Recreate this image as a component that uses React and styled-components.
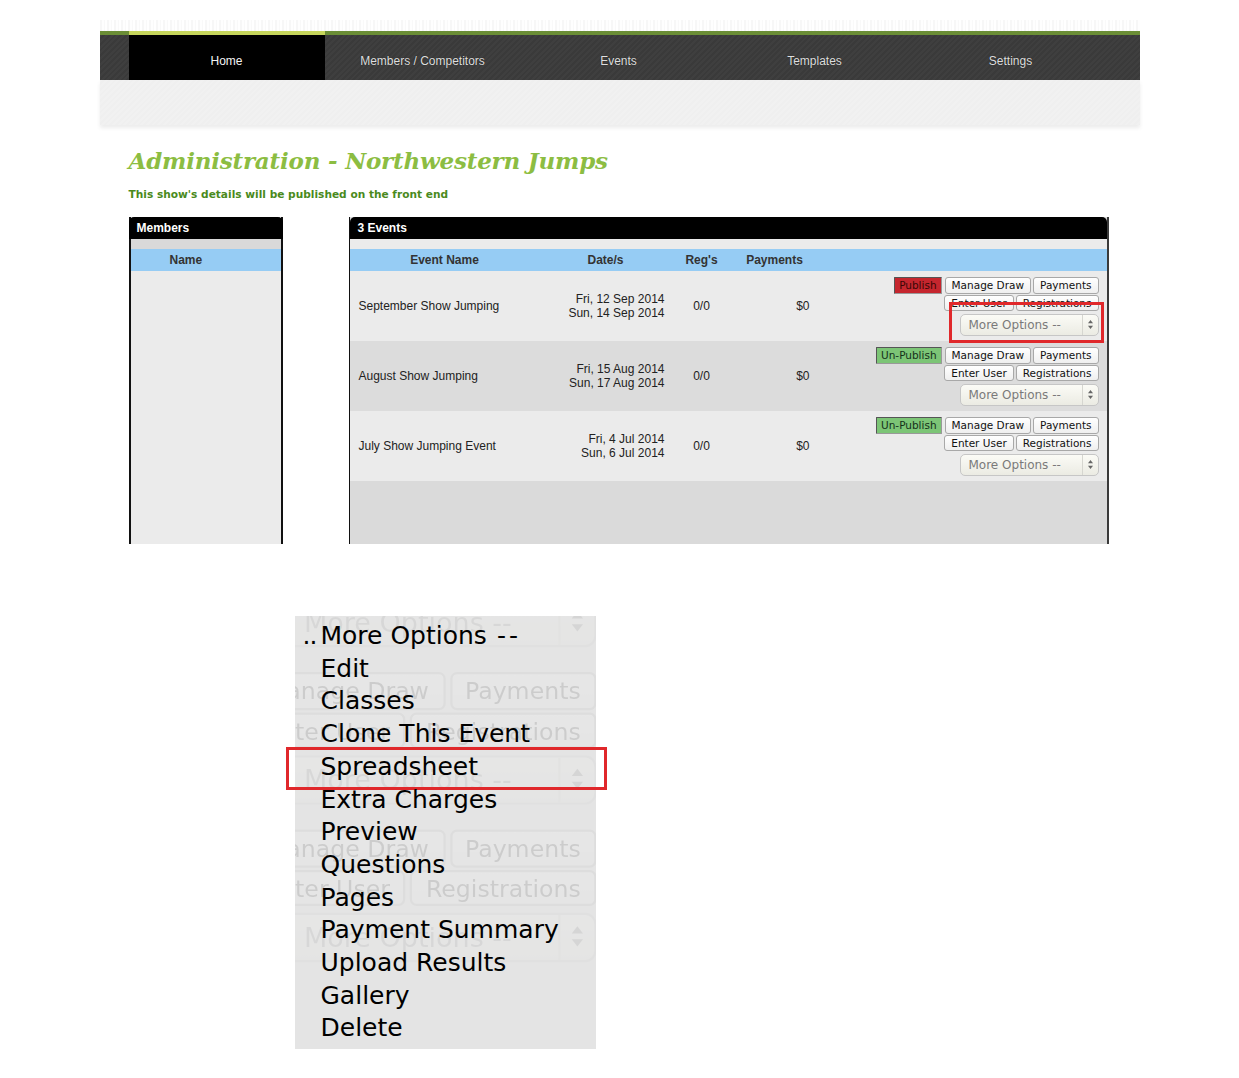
import React from 'react';
import styled, { createGlobalStyle } from 'styled-components';

const GlobalStyle = createGlobalStyle`
  html, body {
    margin: 0;
    padding: 0;
    background: #fff;
  }
  body {
    font-family: "Liberation Sans", Arial, sans-serif;
    color: #222;
  }
`;

const Page = styled.div`
  width: 1040px;
  margin: 0 auto;
  padding-top: 20px;
`;

const PatternStrip = styled.div`
  height: 11px;
  background: repeating-linear-gradient(90deg, #f7f7f7 0 2px, #fefefe 2px 4px, #f9f9f9 4px 5px, #fff 5px 7px);
`;

const GreenBar = styled.div`
  height: 4px;
  padding-left: 29px;
  background: #6b8e36;
`;

const Accent = styled.div`
  width: 196px;
  height: 100%;
  background: #c6d65c;
`;

const Nav = styled.nav`
  display: flex;
  height: 45px;
  padding-left: 29px;
  background: repeating-linear-gradient(135deg, #3f3f3f 0 2px, #3a3a3a 2px 4px);
`;

const Tab = styled.a`
  width: 196px;
  display: flex;
  align-items: center;
  justify-content: center;
  padding-top: 6px;
  box-sizing: border-box;
  font-size: 12px;
  color: ${(p) => (p.active ? '#f4f4f4' : '#dedede')};
  background: ${(p) => (p.active ? '#000' : 'transparent')};
  text-decoration: none;
  text-shadow: 0 0 1px rgba(0, 0, 0, 0.6);
`;

const Band = styled.div`
  height: 45px;
  background: repeating-linear-gradient(135deg, #f1f1f1 0 2px, #efefef 2px 4px);
  box-shadow: 0 3px 4px rgba(0, 0, 0, 0.08);
`;

const Content = styled.main`
  padding: 0 31px 0 29px;
`;

const Title = styled.h1`
  margin: 21px 0 0;
  font-family: "DejaVu Serif", Georgia, serif;
  font-style: italic;
  font-weight: bold;
  font-size: 23px;
  line-height: 30px;
  color: #8cbd42;
  letter-spacing: -0.2px;
`;

const Subtitle = styled.p`
  margin: 10px 0 0;
  font-family: "DejaVu Sans", Verdana, sans-serif;
  font-size: 10.6px;
  line-height: 16px;
  font-weight: bold;
  color: #4a8a1c;
`;

const Panels = styled.div`
  display: flex;
  gap: 66px;
  height: 327px;
  margin-top: 15px;
`;

const Panel = styled.section`
  width: ${(p) => p.width}px;
  display: flex;
  flex-direction: column;
  box-sizing: border-box;
  border-left: ${(p) => p.leftBorder};
  border-right: ${(p) => p.rightBorder};
  background: ${(p) => p.fill};
`;

const PanelHead = styled.header`
  height: 22px;
  flex: none;
  display: flex;
  align-items: center;
  padding-left: 8px;
  margin: 0 ${(p) => p.bleed};
  background: #000;
  border-radius: 5px 5px 0 0;
  color: #fff;
  font-size: 12px;
  font-weight: bold;
`;

const Strip = styled.div`
  height: 10px;
  flex: none;
  background: ${(p) => p.color};
`;

const HeadRow = styled.div`
  height: 22px;
  flex: none;
  display: grid;
  grid-template-columns: ${(p) => p.cols};
  align-items: center;
  background: #96ccf4;
  font-size: 12px;
  font-weight: bold;
  color: #333;
`;

const HeadCell = styled.div`
  text-align: ${(p) => p.align || 'center'};
  padding-left: ${(p) => p.indent || 0}px;
`;

const Row = styled.div`
  height: 70px;
  flex: none;
  display: grid;
  grid-template-columns: 190px 132px 60px 86px 1fr;
  align-items: center;
  background: ${(p) => (p.shade ? '#dcdcdc' : '#ebebeb')};
  font-size: 12px;
  color: #222;
`;

const NameCell = styled.div`
  padding-left: 9px;
`;

const DateCell = styled.div`
  text-align: right;
  padding-right: 7px;
  line-height: 14px;
`;

const RegCell = styled.div`
  text-align: center;
`;

const PayCell = styled.div`
  text-align: right;
  padding-right: 8px;
`;

const ActionsCell = styled.div`
  display: flex;
  justify-content: flex-end;
  padding-right: 8px;
`;

const Stack = styled.div`
  display: flex;
  flex-direction: column;
  align-items: flex-end;
  gap: 1px;
`;

const BtnRow = styled.div`
  display: flex;
  gap: 2px;
`;

const Btn = styled.button`
  height: ${(p) => (p.short ? 16 : 17)}px;
  padding: 0 6px;
  border: 1px solid #a8a8a8;
  border-radius: 3px;
  background: linear-gradient(#ffffff, #efefef);
  font-family: "DejaVu Sans", Verdana, sans-serif;
  font-size: 10.5px;
  line-height: 14px;
  color: #111;
  white-space: nowrap;
`;

const StatusBtn = styled.button`
  height: 17px;
  margin-right: 1px;
  padding: 0 4px;
  border: 1px solid;
  border-color: #555 #999 #999 #555;
  border-radius: 1px;
  background: ${(p) => (p.live ? '#7cc576' : '#c5262e')};
  font-family: "DejaVu Sans", Verdana, sans-serif;
  font-size: 10.5px;
  line-height: 14px;
  color: ${(p) => (p.live ? '#14301a' : '#3a0606')};
  white-space: nowrap;
`;

const SelectBox = styled.div`
  position: relative;
  width: 139px;
  height: 22px;
  margin-top: 2px;
  box-sizing: border-box;
  display: flex;
  align-items: center;
  border: 1px solid #c6c6c6;
  border-radius: 5px;
  background: linear-gradient(#fbfbf6, #ebebe3);
  font-family: "DejaVu Sans", Verdana, sans-serif;
  font-size: 12px;
  color: #7a7a7a;
`;

const SelectText = styled.span`
  flex: 1;
  padding-left: 8px;
`;

const SelectArrows = styled.span`
  width: 15px;
  height: 100%;
  display: flex;
  align-items: center;
  justify-content: center;
  border-left: 1px solid #d6d6d0;
  color: #666;
`;

const Marker = styled.span`
  position: absolute;
  top: -13px;
  left: -12px;
  right: -6px;
  bottom: -8px;
  border: 3px solid #e0282b;
  pointer-events: none;
`;

const Filler = styled.div`
  flex: 1;
  background: #dadada;
`;

const Menu = styled.div`
  position: relative;
  width: 301px;
  margin: 72px 0 0 166px;
  padding: 4px 0;
  background: #e4e4e4;
`;

const Ghost = styled.div`
  position: absolute;
  inset: 0;
  overflow: hidden;
  opacity: 0.11;
  filter: blur(0.6px);
  pointer-events: none;
  user-select: none;
`;

const GhostInner = styled.div`
  position: absolute;
  left: -18px;
  top: -115px;
  width: 150px;
  transform: scale(2.25);
  transform-origin: 0 0;
`;

const GhostRow = styled.div`
  height: 70px;
  display: flex;
  align-items: center;
  justify-content: flex-end;
  padding-right: 8px;
`;

const Item = styled.div`
  position: relative;
  display: grid;
  grid-template-columns: 26px 1fr;
  font-family: "DejaVu Sans", Verdana, sans-serif;
  font-size: 25px;
  line-height: 32.7px;
  color: #000;

  &::after {
    content: '';
    display: ${(p) => (p.marked ? 'block' : 'none')};
    position: absolute;
    top: -4px;
    bottom: -6px;
    left: -9px;
    right: -11px;
    border: 3px solid #e0282b;
  }
`;

const Dots = styled.span`
  justify-self: end;
  margin-right: 4px;
  letter-spacing: -1px;
`;

const Dash = styled.span`
  margin-left: 10px;
  letter-spacing: 3px;
`;

const ArrowGlyph = () => (
  <svg width="7" height="11" viewBox="0 0 7 11">
    <path d="M3.5 1 L6 4.2 H1 Z" fill="#666" />
    <path d="M3.5 10 L6 6.8 H1 Z" fill="#666" />
  </svg>
);

const tabs = ['Home', 'Members / Competitors', 'Events', 'Templates', 'Settings'];

const events = [
  { name: 'September Show Jumping', from: 'Fri, 12 Sep 2014', to: 'Sun, 14 Sep 2014', live: false, marked: true },
  { name: 'August Show Jumping', from: 'Fri, 15 Aug 2014', to: 'Sun, 17 Aug 2014', live: true },
  { name: 'July Show Jumping Event', from: 'Fri, 4 Jul 2014', to: 'Sun, 6 Jul 2014', live: true },
];

const menuItems = [
  'More Options',
  'Edit',
  'Classes',
  'Clone This Event',
  'Spreadsheet',
  'Extra Charges',
  'Preview',
  'Questions',
  'Pages',
  'Payment Summary',
  'Upload Results',
  'Gallery',
  'Delete',
];

const Actions = ({ live, marked }) => (
  <Stack>
    <BtnRow>
      <StatusBtn live={live}>{live ? 'Un-Publish' : 'Publish'}</StatusBtn>
      <Btn>Manage Draw</Btn>
      <Btn>Payments</Btn>
    </BtnRow>
    <BtnRow>
      <Btn short>Enter User</Btn>
      <Btn short>Registrations</Btn>
    </BtnRow>
    <SelectBox>
      <SelectText>More Options --</SelectText>
      <SelectArrows>
        <ArrowGlyph />
      </SelectArrows>
      {marked && <Marker />}
    </SelectBox>
  </Stack>
);

export default function App() {
  return (
    <Page>
      <GlobalStyle />
      <PatternStrip />
      <GreenBar>
        <Accent />
      </GreenBar>
      <Nav>
        {tabs.map((t, i) => (
          <Tab key={t} active={i === 0}>
            {t}
          </Tab>
        ))}
      </Nav>
      <Band />

      <Content>
        <Title>Administration - Northwestern Jumps</Title>
        <Subtitle>This show's details will be published on the front end</Subtitle>

        <Panels>
          <Panel width={154} fill="#ebebeb" leftBorder="2px solid #111" rightBorder="2px solid #111">
            <PanelHead bleed="-2px">Members</PanelHead>
            <Strip color="#d9d9d9" />
            <HeadRow cols="1fr">
              <HeadCell align="left" indent={39}>
                Name
              </HeadCell>
            </HeadRow>
          </Panel>

          <Panel width={760} fill="#dadada" leftBorder="1px solid #111" rightBorder="2px solid #3a3a3a">
            <PanelHead bleed="-1px -2px 0 -1px">3 Events</PanelHead>
            <Strip color="#ebebeb" />
            <HeadRow cols="190px 132px 60px 86px 1fr">
              <HeadCell>Event Name</HeadCell>
              <HeadCell>Date/s</HeadCell>
              <HeadCell>Reg's</HeadCell>
              <HeadCell>Payments</HeadCell>
              <HeadCell />
            </HeadRow>
            {events.map((e, i) => (
              <Row key={e.name} shade={i % 2 === 1}>
                <NameCell>{e.name}</NameCell>
                <DateCell>
                  {e.from}
                  <br />
                  {e.to}
                </DateCell>
                <RegCell>0/0</RegCell>
                <PayCell>$0</PayCell>
                <ActionsCell>
                  <Actions live={e.live} marked={e.marked} />
                </ActionsCell>
              </Row>
            ))}
            <Filler />
          </Panel>
        </Panels>

        <Menu>
          <Ghost aria-hidden="true">
            <GhostInner>
              {events.map((e) => (
                <GhostRow key={e.name}>
                  <Actions live={e.live} />
                </GhostRow>
              ))}
            </GhostInner>
          </Ghost>
          {menuItems.map((m, i) => (
            <Item key={m} marked={m === 'Spreadsheet'}>
              <Dots>{i === 0 ? '..' : ''}</Dots>
              <span>
                {m}
                {i === 0 && <Dash>--</Dash>}
              </span>
            </Item>
          ))}
        </Menu>
      </Content>
    </Page>
  );
}
